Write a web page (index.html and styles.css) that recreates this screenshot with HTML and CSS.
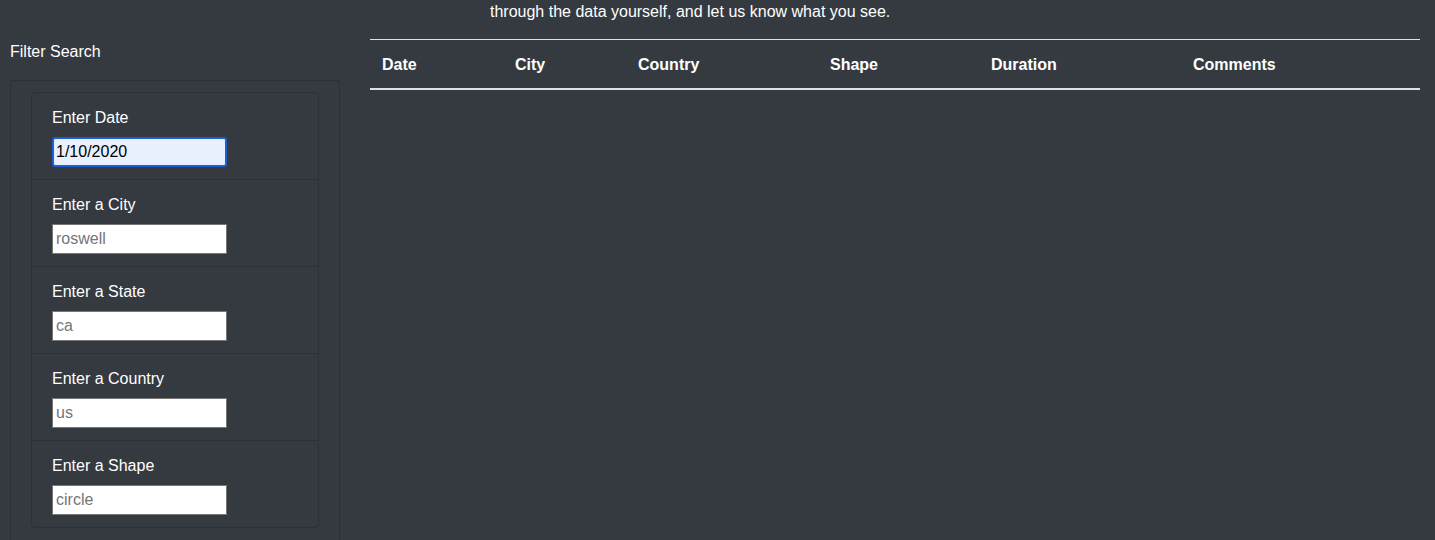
FILE: index.html
```html
<!DOCTYPE html>
<html lang="en">
<head>
<meta charset="utf-8">
<title>UFO Sightings</title>
<link rel="stylesheet" href="styles.css">
</head>
<body>
  <div class="intro">
    <p class="intro-text">through the data yourself, and let us know what you see.</p>
  </div>
  <div class="main">
    <aside class="sidebar">
      <div class="sidebar-title">Filter Search</div>
      <div class="panel">
        <ul class="filters">
          <li class="filter">
            <label class="filter-label" for="datetime">Enter Date</label>
            <input class="filter-input is-focused" id="datetime" type="text" value="1/10/2020">
          </li>
          <li class="filter">
            <label class="filter-label" for="city">Enter a City</label>
            <input class="filter-input" id="city" type="text" placeholder="roswell">
          </li>
          <li class="filter">
            <label class="filter-label" for="state">Enter a State</label>
            <input class="filter-input" id="state" type="text" placeholder="ca">
          </li>
          <li class="filter">
            <label class="filter-label" for="country">Enter a Country</label>
            <input class="filter-input" id="country" type="text" placeholder="us">
          </li>
          <li class="filter">
            <label class="filter-label" for="shape">Enter a Shape</label>
            <input class="filter-input" id="shape" type="text" placeholder="circle">
          </li>
        </ul>
      </div>
    </aside>
    <section class="results">
      <table class="ufo-table">
        <thead>
          <tr>
            <th class="col-date">Date</th>
            <th class="col-city">City</th>
            <th class="col-country">Country</th>
            <th class="col-shape">Shape</th>
            <th class="col-duration">Duration</th>
            <th class="col-comments">Comments</th>
          </tr>
        </thead>
        <tbody></tbody>
      </table>
    </section>
  </div>
</body>
</html>
```

FILE: styles.css
```css
* {
  box-sizing: border-box;
}

html, body {
  margin: 0;
  padding: 0;
}

body {
  background: #343a40;
  color: #ffffff;
  font-family: "Liberation Sans", Arial, Helvetica, sans-serif;
  font-size: 16px;
  line-height: 24px;
  height: 540px;
  overflow: hidden;
}

.intro {
  padding-left: 490px;
  height: 24px;
}

.intro-text {
  margin: 0;
  line-height: 24px;
}

.main {
  display: flex;
  align-items: flex-start;
  margin-top: 15px;
}

.sidebar {
  width: 330px;
  margin-left: 10px;
  flex: none;
}

.sidebar-title {
  padding-top: 1px;
  line-height: 24px;
  margin-bottom: 16px;
}

.panel {
  border: 1px solid #2c3136;
  padding: 11px 20px 20px;
}

.filters {
  list-style: none;
  margin: 0;
  padding: 0;
  border: 1px solid #2c3136;
  border-radius: 4px;
}

.filter {
  padding: 13px 20px 12px;
  border-top: 1px solid #2c3136;
}

.filter:first-child {
  border-top: none;
}

.filter-label {
  display: block;
  line-height: 24px;
  margin-bottom: 7px;
}

.filter-input {
  display: block;
  width: 175px;
  height: 30px;
  margin: 0;
  padding: 0 3px;
  border: 1px solid #767676;
  border-radius: 0;
  background: #ffffff;
  color: #000000;
  font-family: "Liberation Sans", Arial, Helvetica, sans-serif;
  font-size: 16px;
  outline: none;
}

.filter-input::placeholder {
  color: #757575;
  opacity: 1;
}

.filter-input.is-focused {
  background: #e8f0fe;
  border: 2px solid #1a5fd6;
  border-radius: 3px;
  padding: 0 2px;
}

.results {
  margin-left: 30px;
  width: 1050px;
  flex: none;
}

.ufo-table {
  width: 1050px;
  border-collapse: collapse;
  table-layout: fixed;
  color: #ffffff;
}

.ufo-table th {
  text-align: left;
  font-weight: bold;
  padding: 13px 12px 11px;
  line-height: 24px;
  border-top: 1px solid #dee2e6;
  border-bottom: 2px solid #dee2e6;
}

.col-date { width: 133px; }
.col-city { width: 123px; }
.col-country { width: 192px; }
.col-shape { width: 161px; }
.col-duration { width: 202px; }
.col-comments { width: 239px; }
```
